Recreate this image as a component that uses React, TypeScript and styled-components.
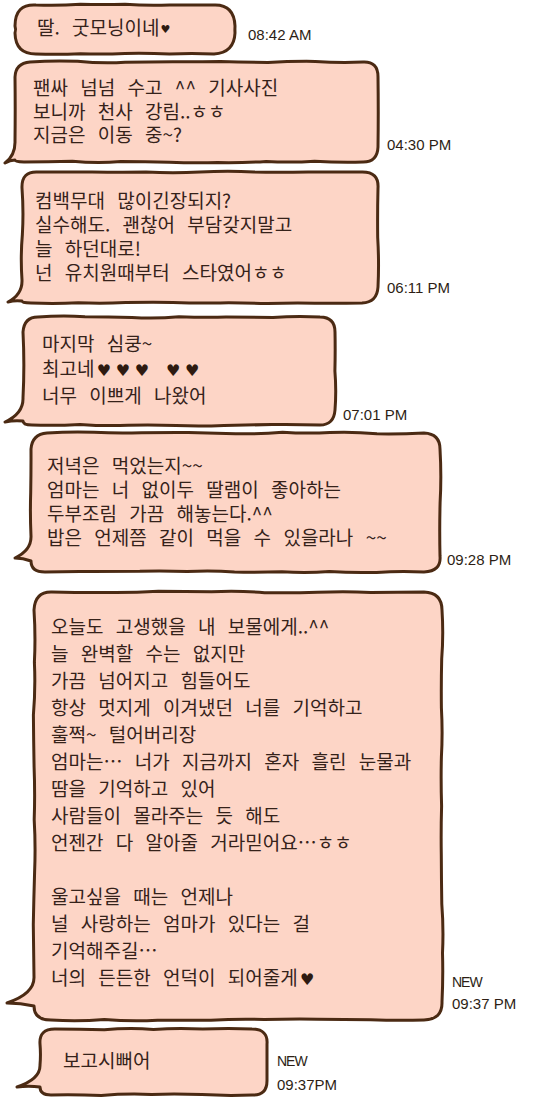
import styled, { createGlobalStyle } from 'styled-components'

const GlobalStyle = createGlobalStyle`
  html, body {
    margin: 0;
    padding: 0;
    background: #ffffff;
  }
  body {
    font-family: "Noto Sans CJK KR", "Noto Sans", sans-serif;
  }
`

type Tail = { x: number; y: number; up: number; low: number }

type Message = {
  top: number
  left: number
  w: number
  h: number
  r: number
  padTop: number
  padLeft: number
  lh: number
  lines: string[]
  meta: string[]
  metaGap: number
  metaBottom: number
  metaLh: number
  tail?: Tail
  smallHeart?: boolean
  seed: number
}

const messages: Message[] = [
  {
    top: 5, left: 15, w: 220, h: 49, r: 21, padTop: 10, padLeft: 22, lh: 24,
    lines: ['딸. 굿모닝이네♥'], smallHeart: true,
    meta: ['08:42 AM'], metaGap: 13, metaBottom: 10, metaLh: 18, seed: 3,
  },
  {
    top: 8, left: 15, w: 363, h: 100, r: 15, padTop: 13, padLeft: 18, lh: 23.5,
    lines: ['팬싸 넘넘 수고 ^^ 기사사진', '보니까 천사 강림..ㅎㅎ', '지금은 이동 중~?'],
    meta: ['04:30 PM'], metaGap: 9, metaBottom: 8, metaLh: 18,
    tail: { x: -10, y: -1, up: 22, low: 2 }, seed: 7,
  },
  {
    top: 10, left: 22, w: 356, h: 131, r: 16, padTop: 16, padLeft: 13, lh: 24,
    lines: ['컴백무대 많이긴장되지?', '실수해도. 괜찮어 부담갖지말고', '늘 하던대로!', '넌 유치원때부터 스타였어ㅎㅎ'],
    meta: ['06:11 PM'], metaGap: 9, metaBottom: 6, metaLh: 18,
    tail: { x: -14, y: 1, up: 22, low: 2 }, seed: 11,
  },
  {
    top: 14, left: 23, w: 312, h: 108, r: 15, padTop: 14, padLeft: 19, lh: 24.5,
    lines: ['마지막 심쿵~', '최고네♥♥♥ ♥♥', '너무 이쁘게 나왔어'],
    meta: ['07:01 PM'], metaGap: 8, metaBottom: 1, metaLh: 18,
    tail: { x: -18, y: 3, up: 24, low: 4 }, seed: 19,
  },
  {
    top: 8, left: 31, w: 409, h: 139, r: 16, padTop: 20, padLeft: 16, lh: 24,
    lines: ['저녁은 먹었는지~~', '엄마는 너 없이두 딸램이 좋아하는', '두부조림 가끔 해놓는다.^^', '밥은 언제쯤 같이 먹을 수 있을라나 ~~'],
    meta: ['09:28 PM'], metaGap: 7, metaBottom: 3, metaLh: 18,
    tail: { x: -16, y: 14, up: 22, low: 11 }, seed: 23,
  },
  {
    top: 20, left: 34, w: 408, h: 428, r: 18, padTop: 20, padLeft: 17, lh: 27,
    lines: [
      '오늘도 고생했을 내 보물에게..^^',
      '늘 완벽할 수는 없지만',
      '가끔 넘어지고 힘들어도',
      '항상 멋지게 이겨냈던 너를 기억하고',
      '훌쩍~ 털어버리장',
      '엄마는… 너가 지금까지 혼자 흘린 눈물과',
      '땀을 기억하고 있어',
      '사람들이 몰라주는 듯 해도',
      '언젠간 다 알아줄 거라믿어요…ㅎㅎ',
      '',
      '울고싶을 때는 언제나',
      '널 사랑하는 엄마가 있다는 걸',
      '기억해주길…',
      '너의 든든한 언덕이 되어줄게♥',
    ],
    meta: ['NEW', '09:37 PM'], metaGap: 10, metaBottom: 6, metaLh: 21,
    tail: { x: -27, y: 17, up: 26, low: 14 }, seed: 31,
  },
  {
    top: 9, left: 40, w: 227, h: 66, r: 15, padTop: 19, padLeft: 23, lh: 24,
    lines: ['보고시뻐어'],
    meta: ['NEW', '09:37PM'], metaGap: 10, metaBottom: -1, metaLh: 23,
    tail: { x: -23, y: 8, up: 22, low: 8 }, seed: 37,
  },
]

// small seeded random so the hand-drawn wobble is the same every render
function mulberry32(seed: number) {
  let a = seed
  return () => {
    a |= 0
    a = (a + 0x6d2b79f5) | 0
    let t = Math.imul(a ^ (a >>> 15), 1 | a)
    t = (t + Math.imul(t ^ (t >>> 7), 61 | t)) ^ t
    return ((t ^ (t >>> 14)) >>> 0) / 4294967296
  }
}

function outline(w: number, h: number, r: number, tail: Tail | undefined, seed: number) {
  const rnd = mulberry32(seed)
  const j = (a = 1.4) => (rnd() * 2 - 1) * a
  const f = (n: number) => n.toFixed(1)

  const edge = (x1: number, y1: number, x2: number, y2: number) => {
    const len = Math.hypot(x2 - x1, y2 - y1) || 1
    const n = Math.max(1, Math.round(len / 50))
    const nx = -(y2 - y1) / len
    const ny = (x2 - x1) / len
    let s = ''
    for (let i = 1; i <= n; i++) {
      const tm = (i - 0.5) / n
      const t1 = i / n
      const o = j(1.8)
      const cx = x1 + (x2 - x1) * tm + nx * o
      const cy = y1 + (y2 - y1) * tm + ny * o
      const e = i === n ? 0 : j(0.8)
      const ex = x1 + (x2 - x1) * t1 + nx * e
      const ey = y1 + (y2 - y1) * t1 + ny * e
      s += ` Q ${f(cx)} ${f(cy)} ${f(ex)} ${f(ey)}`
    }
    return s
  }

  let d = `M ${r} 0`
  d += edge(r, 0, w - r, 0)
  d += ` Q ${f(w + j())} ${f(j())} ${w} ${r}`
  d += edge(w, r, w, h - r)
  d += ` Q ${f(w + j())} ${f(h + j())} ${w - r} ${h}`
  if (tail) {
    const lowY = h - tail.low
    const tipX = tail.x
    const tipY = h - tail.y
    const upY = tipY - tail.up
    const c = Math.max(tail.low, 6) + 3
    d += edge(w - r, h, c, h)
    d += ` Q 0 ${h} 0 ${f(lowY)}`
    d += ` Q ${f(tipX * 0.5)} ${f((lowY + tipY) / 2 - 1.5)} ${tipX} ${tipY}`
    d += ` Q 0.5 ${f(tipY - tail.up * 0.35)} 0 ${f(upY)}`
    d += edge(0, upY, 0, r)
  } else {
    d += edge(w - r, h, r, h)
    d += ` Q ${f(j())} ${f(h + j())} 0 ${h - r}`
    d += edge(0, h - r, 0, r)
  }
  d += ` Q ${f(j())} ${f(j())} ${r} 0 Z`
  return d
}

const Page = styled.div`
  width: 537px;
  min-height: 1108px;
  display: flex;
  flex-direction: column;
  overflow: hidden;
`

const Row = styled.div<{ $top: number; $left: number }>`
  display: flex;
  align-items: flex-end;
  margin-top: ${(p) => p.$top}px;
  padding-left: ${(p) => p.$left}px;
`

const Bubble = styled.div<{ $w: number; $h: number }>`
  position: relative;
  flex: none;
  width: ${(p) => p.$w}px;
  height: ${(p) => p.$h}px;
`

const Outline = styled.svg`
  position: absolute;
  left: 0;
  top: 0;
  overflow: visible;
`

const OutlinePath = styled.path`
  fill: #fdd5c6;
  stroke: #4b2a13;
  stroke-width: 3;
  stroke-linejoin: round;
  stroke-linecap: round;
`

const Text = styled.div<{ $padTop: number; $padLeft: number; $lh: number }>`
  position: relative;
  padding: ${(p) => p.$padTop}px 0 0 ${(p) => p.$padLeft}px;
  font-size: 19px;
  line-height: ${(p) => p.$lh}px;
  color: #35221a;
  white-space: pre;
  word-spacing: 7px;
`

const Line = styled.div`
  min-height: 1em;
`

const Heart = styled.span<{ $small?: boolean }>`
  display: inline-block;
  font-family: "DejaVu Sans", sans-serif;
  font-size: ${(p) => (p.$small ? '11px' : '16px')};
  width: ${(p) => (p.$small ? '12px' : '19px')};
  text-align: center;
  vertical-align: ${(p) => (p.$small ? '2px' : '0')};
  color: #2e1a10;
`

const Meta = styled.div<{ $gap: number; $bottom: number; $lh: number }>`
  margin-left: ${(p) => p.$gap}px;
  margin-bottom: ${(p) => p.$bottom}px;
  font-family: "Liberation Sans", Arial, sans-serif;
  font-size: 15px;
  line-height: ${(p) => p.$lh}px;
  color: #2d1e15;
  white-space: nowrap;
`

const MetaLine = styled.div<{ $tag?: boolean }>`
  font-size: ${(p) => (p.$tag ? '14px' : '15px')};
  letter-spacing: ${(p) => (p.$tag ? '-1px' : '0')};
`

function renderLine(text: string, small?: boolean) {
  if (!text) return '\u00a0'
  return text.split(/(♥)/).map((part, i) =>
    part === '♥' ? (
      <Heart key={i} $small={small}>
        ♥
      </Heart>
    ) : (
      part
    ),
  )
}

export default function App() {
  return (
    <Page lang="ko">
      <GlobalStyle />
      {messages.map((m, i) => (
        <Row key={i} $top={m.top} $left={m.left}>
          <Bubble $w={m.w} $h={m.h}>
            <Outline width={m.w} height={m.h} viewBox={`0 0 ${m.w} ${m.h}`}>
              <OutlinePath d={outline(m.w, m.h, m.r, m.tail, m.seed)} />
            </Outline>
            <Text $padTop={m.padTop} $padLeft={m.padLeft} $lh={m.lh}>
              {m.lines.map((l, k) => (
                <Line key={k}>{renderLine(l, m.smallHeart)}</Line>
              ))}
            </Text>
          </Bubble>
          <Meta $gap={m.metaGap} $bottom={m.metaBottom} $lh={m.metaLh}>
            {m.meta.map((t, k) => (
              <MetaLine key={k} $tag={t === 'NEW'}>
                {t}
              </MetaLine>
            ))}
          </Meta>
        </Row>
      ))}
    </Page>
  )
}
